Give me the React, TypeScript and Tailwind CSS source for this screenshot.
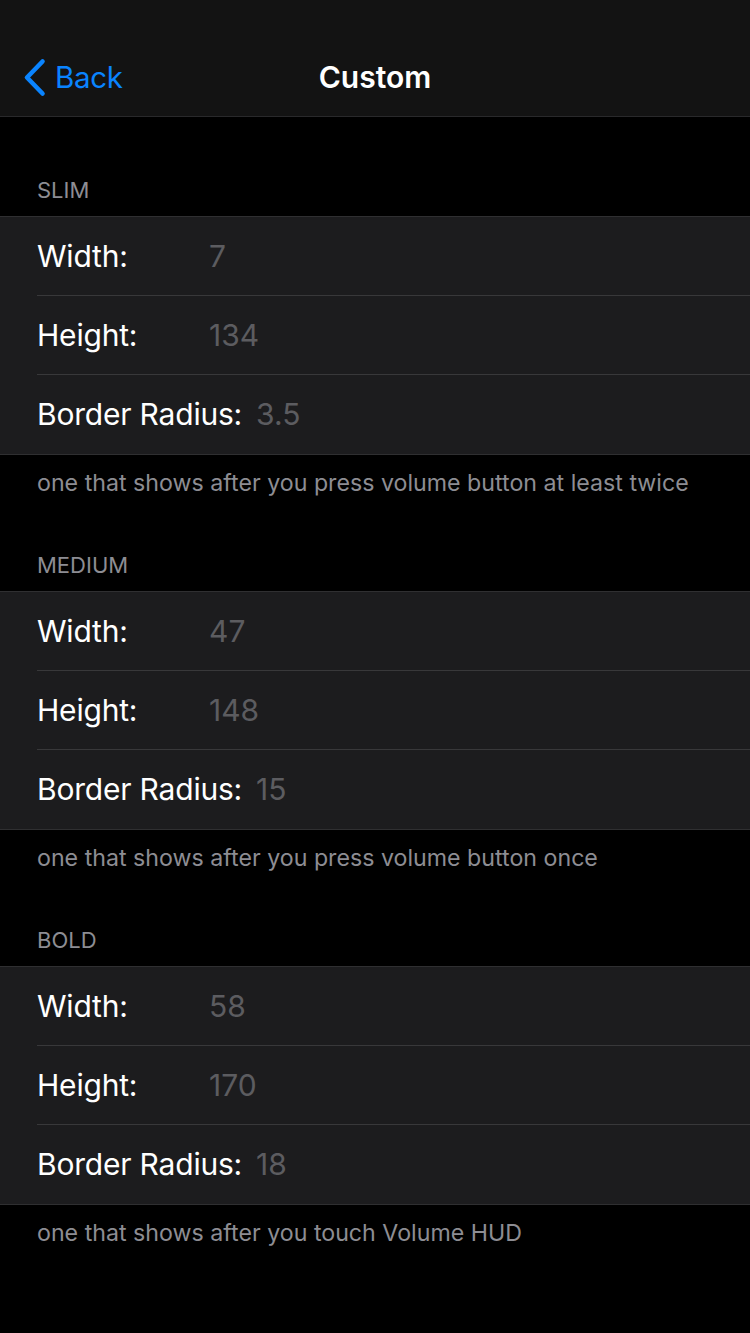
import React from 'react';

type Row = { label: string; value: string };
type Section = { title: string; rows: Row[]; footer: string };

const sections: Section[] = [
  {
    title: 'SLIM',
    rows: [
      { label: 'Width:', value: '7' },
      { label: 'Height:', value: '134' },
      { label: 'Border Radius:', value: '3.5' },
    ],
    footer: 'one that shows after you press volume button at least twice',
  },
  {
    title: 'MEDIUM',
    rows: [
      { label: 'Width:', value: '47' },
      { label: 'Height:', value: '148' },
      { label: 'Border Radius:', value: '15' },
    ],
    footer: 'one that shows after you press volume button once',
  },
  {
    title: 'BOLD',
    rows: [
      { label: 'Width:', value: '58' },
      { label: 'Height:', value: '170' },
      { label: 'Border Radius:', value: '18' },
    ],
    footer: 'one that shows after you touch Volume HUD',
  },
];

function NavBar() {
  return (
    <header className="h-[117px] pt-[39px] bg-[#131313] border-b border-[#29292b]">
      <div className="relative flex items-center h-[76px]">
        {/* Back button */}
        <button className="flex items-center gap-[9px] pl-[23px] text-[#0a84ff]">
          <svg width="23" height="39" viewBox="0 0 23 39" fill="none">
            <path d="M19.5 3.5L4 19.5L19.5 35.5" stroke="currentColor" strokeWidth="4.6" strokeLinecap="round" strokeLinejoin="round" />
          </svg>
          <span className="text-[29.5px] tracking-[-0.3px]">Back</span>
        </button>

        {/* Title */}
        <h1 className="absolute left-0 right-0 text-center text-[30px] font-semibold text-white pointer-events-none">
          Custom
        </h1>
      </div>
    </header>
  );
}

function SettingsSection({ section }: { section: Section }) {
  return (
    <section>
      <div className="h-[37px] px-[37px] text-[22px] text-[#8d8d93] leading-none">
        {section.title}
      </div>
      <div className="bg-[#1c1c1e] border-y border-[#2f2f31]">
        {section.rows.map((row, i) => (
          <div key={row.label} className="pl-[37px]">
            <div
              className={
                'flex items-center h-[79px] ' +
                (i < section.rows.length - 1 ? 'border-b border-[#38383a]' : '')
              }
            >
              <span className="min-w-[158px] mr-[14px] text-[30px] text-white tracking-[-0.2px]">
                {row.label}
              </span>
              <span className="text-[30px] text-[#5c5c60]">{row.value}</span>
            </div>
          </div>
        ))}
      </div>
      <p className="px-[37px] pt-[14px] h-[99px] text-[23.2px] leading-[28px] text-[#8d8d93]">
        {section.footer}
      </p>
    </section>
  );
}

export default function App() {
  return (
    <div className="min-h-[1333px] bg-black" style={{ fontFamily: 'Inter, "Noto Sans", sans-serif' }}>
      <NavBar />
      <main className="pt-[62px]">
        {sections.map((s) => (
          <SettingsSection key={s.title} section={s} />
        ))}
      </main>
    </div>
  );
}
